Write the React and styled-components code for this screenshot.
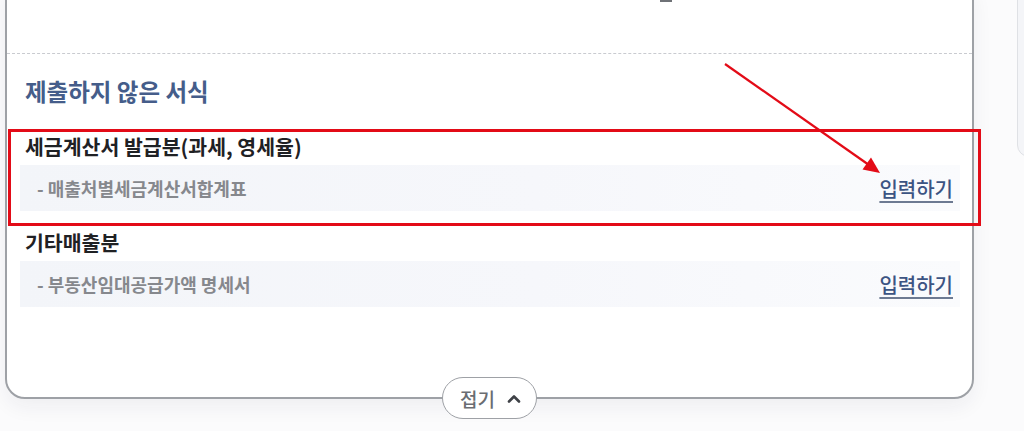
import React from "react"
import styled, { createGlobalStyle } from "styled-components"

const GlobalStyle = createGlobalStyle`
  html, body {
    margin: 0;
    padding: 0;
    background: #fbfbfc;
    overflow: hidden;
    font-family: "Noto Sans CJK KR", "Noto Sans", sans-serif;
  }
`

const Page = styled.div`
  position: relative;
  width: 1024px;
  height: 431px;
  display: flex;
  align-items: flex-start;
  gap: 43px;
  padding-left: 5px;
  box-sizing: border-box;
  overflow: hidden;
`

const Card = styled.section`
  width: 969px;
  flex-shrink: 0;
  margin-top: -20px;
  background: #fff;
  border: 2px solid #9ea1a6;
  border-radius: 20px;
  box-sizing: border-box;
  box-shadow: 0 8px 20px rgba(30, 40, 60, 0.06);
  display: flex;
  flex-direction: column;
`

const TopArea = styled.div`
  height: 71px;
  border-bottom: 1px dashed #c9cbd0;
  display: flex;
  align-items: flex-start;
`

const CutLink = styled.span`
  width: 12px;
  height: 2px;
  margin-top: 18px;
  margin-left: 653px;
  background: #6f7277;
`

const Content = styled.div`
  padding: 22px 12px 0 13px;
  display: flex;
  flex-direction: column;
`

const SectionTitle = styled.h2`
  margin: 0 0 26px;
  padding-left: 5px;
  font-size: 23.5px;
  line-height: 30px;
  font-weight: 600;
  color: #455d8a;
`

const Group = styled.div`
  display: flex;
  flex-direction: column;
  margin-bottom: ${(p) => p.$gap || 0}px;
`

const GroupTitle = styled.h3`
  margin: 0 0 5px;
  padding-left: 5px;
  font-size: 20.5px;
  line-height: 28px;
  font-weight: 700;
  color: #1f2124;
`

const FormRow = styled.div`
  height: 46px;
  display: flex;
  align-items: center;
  justify-content: space-between;
  padding: 0 7px 0 17px;
  background: linear-gradient(90deg, #f3f5f9 0%, #f6f7fb 55%, #fafbfd 100%);
`

const FormName = styled.span`
  font-size: 18px;
  font-weight: 600;
  color: #86888d;
`

const InputLink = styled.a`
  font-size: 20px;
  font-weight: 500;
  color: #3c5483;
  text-decoration: underline;
  text-decoration-thickness: 2px;
  text-underline-offset: 4px;
  text-decoration-color: #6d7a92;
  cursor: pointer;
`

const Footer = styled.div`
  display: flex;
  justify-content: center;
  margin-top: 70px;
  margin-bottom: -22px;
`

const FoldButton = styled.button`
  width: 95px;
  height: 42px;
  border: 1.5px solid #9ea1a6;
  border-radius: 21px;
  background: #fff;
  display: flex;
  align-items: center;
  justify-content: center;
  gap: 12px;
  padding: 0 0 0 2px;
  font-family: inherit;
  font-size: 19px;
  font-weight: 500;
  color: #6a6d72;
  cursor: pointer;
`

const SidePanel = styled.div`
  width: 80px;
  height: 175px;
  flex-shrink: 0;
  margin-top: -20px;
  background: #f4f5f8;
  border: 1px solid #dfe1e5;
  border-radius: 0 0 0 12px;
`

const Highlight = styled.div`
  position: absolute;
  left: 8px;
  top: 129px;
  width: 973px;
  height: 97px;
  border: 3px solid #e30b17;
  box-sizing: border-box;
  pointer-events: none;
`

const ArrowLayer = styled.svg`
  position: absolute;
  left: 0;
  top: 0;
  pointer-events: none;
`

const groups = [
  { title: "세금계산서 발급분(과세, 영세율)", form: "- 매출처별세금계산서합계표", gap: 17 },
  { title: "기타매출분", form: "- 부동산임대공급가액 명세서", gap: 0 },
]

export default function App() {
  return (
    <>
      <GlobalStyle />
      <Page>
        <Card>
          <TopArea>
            <CutLink />
          </TopArea>
          <Content>
            <SectionTitle>제출하지 않은 서식</SectionTitle>
            {groups.map((g) => (
              <Group key={g.title} $gap={g.gap}>
                <GroupTitle>{g.title}</GroupTitle>
                <FormRow>
                  <FormName>{g.form}</FormName>
                  <InputLink>입력하기</InputLink>
                </FormRow>
              </Group>
            ))}
          </Content>
          <Footer>
            <FoldButton>
              접기
              <svg width="14" height="9" viewBox="0 0 14 9">
                <path d="M2 7.5 L7 2.5 L12 7.5" fill="none" stroke="#3f4247" strokeWidth="2.6" strokeLinecap="round" strokeLinejoin="round" />
              </svg>
            </FoldButton>
          </Footer>
        </Card>
        <SidePanel />
        <Highlight />
        <ArrowLayer width="1024" height="431" viewBox="0 0 1024 431">
          <line x1="725" y1="64" x2="869" y2="165" stroke="#e30b17" strokeWidth="2.2" />
          <polygon points="880,173 862.5,169.5 871,157.5" fill="#e30b17" />
        </ArrowLayer>
      </Page>
    </>
  )
}
